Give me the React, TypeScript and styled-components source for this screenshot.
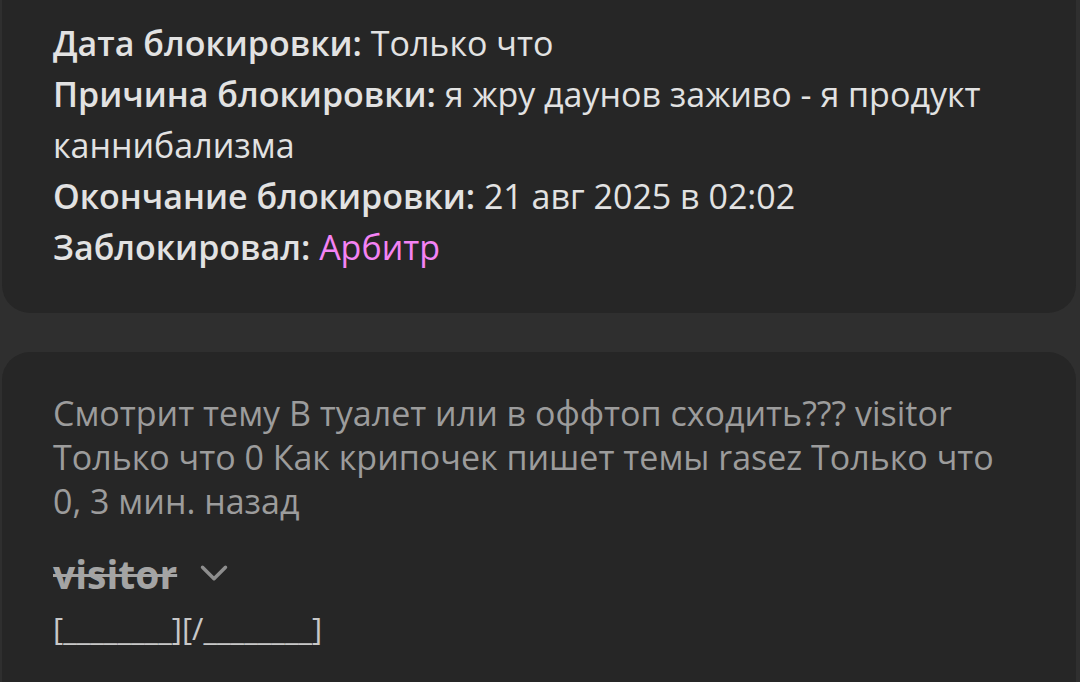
import styled, { createGlobalStyle } from 'styled-components'
import { ChevronDown } from 'lucide-react'

const GlobalStyle = createGlobalStyle`
  html, body {
    margin: 0;
    padding: 0;
    background: #2f2f2f;
  }
  body {
    font-family: 'Open Sans', 'Noto Sans', sans-serif;
    overflow: hidden;
  }
`

const Page = styled.main`
  display: flex;
  flex-direction: column;
  gap: 39px;
  height: 682px;
  padding: 0 4px 0 2px;
  box-sizing: border-box;
`

const Card = styled.section<{ $first?: boolean }>`
  background: #262626;
  border-radius: ${p => (p.$first ? '0 0 28px 28px' : '28px 28px 0 0')};
  padding: ${p => (p.$first ? '18px 51px 40px' : '39px 51px 0')};
  flex: ${p => (p.$first ? 'none' : '1')};
`

const InfoLine = styled.div`
  font-size: 34px;
  line-height: 51px;
  color: #e2e2e2;

  & > b {
    font-weight: 600;
  }
`

const Moderator = styled.span`
  color: #f483f4;
  font-weight: 500;
`

const Activity = styled.p`
  margin: 0;
  font-size: 34px;
  line-height: 44px;
  color: #9c9c9c;
`

const UserRow = styled.div`
  display: flex;
  align-items: center;
  gap: 14px;
  margin-top: 22px;
  height: 56px;
  color: #a4a4a4;
`

const BannedName = styled.span`
  font-size: 39px;
  font-weight: 700;
  text-decoration: line-through;
  text-decoration-thickness: 3px;
`

const Placeholder = styled.div`
  margin-top: 5px;
  font-size: 31px;
  line-height: 44px;
  color: #c8c8c8;
`

export default function App () {
  return (
    <>
      <GlobalStyle />
      <Page>
        <Card $first>
          <InfoLine><b>Дата блокировки:</b> Только что</InfoLine>
          <InfoLine><b>Причина блокировки:</b> я жру даунов заживо - я продукт каннибализма</InfoLine>
          <InfoLine><b>Окончание блокировки:</b> 21 авг 2025 в 02:02</InfoLine>
          <InfoLine><b>Заблокировал:</b> <Moderator>Арбитр</Moderator></InfoLine>
        </Card>
        <Card>
          <Activity>
            Смотрит тему В туалет или в оффтоп сходить??? visitor Только что 0 Как крипочек пишет темы rasez Только что 0, 3 мин. назад
          </Activity>
          <UserRow>
            <BannedName>visitor</BannedName>
            <ChevronDown size={46} strokeWidth={1.8} color="#8e8e8e" />
          </UserRow>
          <Placeholder>[________][/________]</Placeholder>
        </Card>
      </Page>
    </>
  )
}
